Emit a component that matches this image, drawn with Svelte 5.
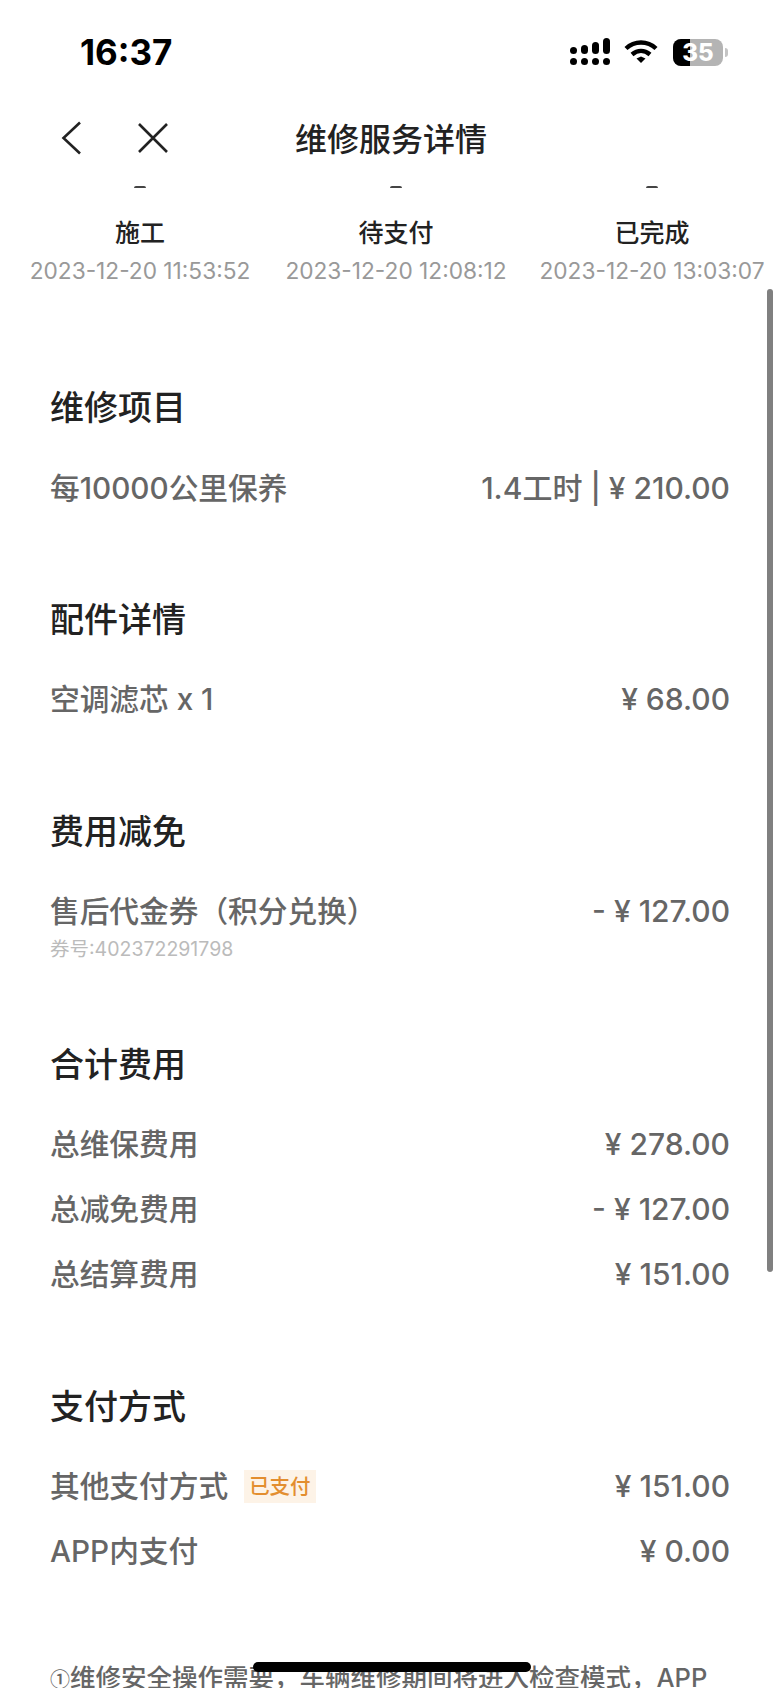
<script>
  const steps = [
    { name: "施工", time: "2023-12-20 11:53:52" },
    { name: "待支付", time: "2023-12-20 12:08:12" },
    { name: "已完成", time: "2023-12-20 13:03:07" }
  ];
  const sections = [
    { title: "维修项目", rows: [{ label: "每10000公里保养", value: "1.4工时 | ¥ 210.00" }] },
    { title: "配件详情", rows: [{ label: "空调滤芯 x 1", value: "¥ 68.00" }] },
    {
      title: "费用减免",
      rows: [{ label: "售后代金券（积分兑换）", value: "- ¥ 127.00", sub: "券号:402372291798" }]
    },
    {
      title: "合计费用",
      rows: [
        { label: "总维保费用", value: "¥ 278.00" },
        { label: "总减免费用", value: "- ¥ 127.00" },
        { label: "总结算费用", value: "¥ 151.00" }
      ]
    },
    {
      title: "支付方式",
      rows: [
        { label: "其他支付方式", value: "¥ 151.00", badge: "已支付" },
        { label: "APP内支付", value: "¥ 0.00" }
      ]
    }
  ];
</script>

<div class="page">
  <div class="status">
    <span class="clock">16:37</span>
    <div class="status-icons">
      <svg class="signal" width="40" height="28" viewBox="0 0 40 28" fill="#000">
        <rect x="0" y="9" width="7" height="7" rx="3.5" />
        <rect x="11" y="7" width="7" height="9" rx="3.5" />
        <rect x="22" y="4" width="7" height="12" rx="3.5" />
        <rect x="33" y="0" width="7" height="16" rx="3.5" />
        <circle cx="3.5" cy="23.5" r="3.5" />
        <circle cx="14.5" cy="23.5" r="3.5" />
        <circle cx="25.5" cy="23.5" r="3.5" />
        <circle cx="36.5" cy="23.5" r="3.5" />
      </svg>
      <svg class="wifi" width="34" height="26" viewBox="0 0 34 26" fill="none" stroke="#000" stroke-width="4.4">
        <path d="M2 9.5C10.500 1.500 23.500 1.500 32 9.500" />
        <path d="M8 15.500C13.500 10.800 20.500 10.800 26 15.500" />
        <path d="M12.500 19.500L17 24L21.500 19.500L17 17.500Z" fill="#000" stroke="none" />
      </svg>
      <div class="battery">
        <div class="battery-fill"></div>
        <span>35</span>
      </div>
      <div class="battery-nub"></div>
    </div>
  </div>

  <div class="nav">
    <svg class="back" width="20" height="34" viewBox="0 0 20 34" fill="none" stroke="#222" stroke-width="2.6">
      <path d="M19 1.500L2.500 17L19 32.500" />
    </svg>
    <svg class="close" width="32" height="30" viewBox="0 0 32 30" fill="none" stroke="#222" stroke-width="2.6">
      <path d="M2 1L30 29M30 1L2 29" />
    </svg>
    <h1>维修服务详情</h1>
  </div>

  <div class="steps">
    {#each steps as step}
      <div class="step">
        <div class="dot"></div>
        <div class="step-name">{step.name}</div>
        <div class="step-time">{step.time}</div>
      </div>
    {/each}
  </div>

  <div class="content">
    {#each sections as section}
      <section>
        <h2>{section.title}</h2>
        {#each section.rows as row}
          <div class="row">
            <div class="label">
              {row.label}
              {#if row.badge}<span class="badge">{row.badge}</span>{/if}
            </div>
            <div class="value">{row.value}</div>
          </div>
          {#if row.sub}<div class="sub">{row.sub}</div>{/if}
        {/each}
      </section>
    {/each}
    <p class="note"><span class="circled">①</span>维修安全操作需要，车辆维修期间将进入检查模式，APP</p>
  </div>

  <div class="scrollbar"></div>
  <div class="home"></div>
</div>

<style>
  :global(body) {
    background: #fff;
  }

  .page {
    position: relative;
    width: 780px;
    height: 1688px;
    overflow: hidden;
    background: #fff;
    font-family: Inter, "Noto Sans CJK SC", sans-serif;
    color: #222;
  }

  .status {
    display: flex;
    justify-content: space-between;
    align-items: center;
    height: 38px;
    padding: 33px 52px 0 80px;
  }

  .clock {
    font-size: 35px;
    font-weight: 700;
    color: #000;
  }

  .status-icons {
    display: flex;
    align-items: center;
  }

  .wifi {
    margin-left: 14px;
  }

  .battery {
    position: relative;
    width: 50px;
    height: 27px;
    margin-left: 15px;
    border-radius: 8px;
    background: #b4b4b4;
    overflow: hidden;
    text-align: center;
    color: #fff;
    font-size: 24px;
    font-weight: 800;
    line-height: 27px;
  }

  .battery-fill {
    position: absolute;
    left: 0;
    top: 0;
    bottom: 0;
    width: 17px;
    background: #000;
  }

  .battery span {
    position: relative;
  }

  .battery-nub {
    width: 3px;
    height: 9px;
    margin-left: 2px;
    border-radius: 0 3px 3px 0;
    background: #c4c4c4;
  }

  .nav {
    position: relative;
    display: flex;
    align-items: center;
    height: 66px;
    margin-top: 34px;
    padding-left: 61px;
  }

  .close {
    margin-left: 56px;
  }

  h1 {
    margin: 4px 0 0 126px;
    font-size: 32px;
    font-weight: 500;
    line-height: 40px;
    color: #222;
  }

  .steps {
    display: grid;
    grid-template-columns: repeat(3, 256px);
    padding: 0 0 0 12px;
    margin-top: 15px;
  }

  .step {
    display: flex;
    flex-direction: column;
    align-items: center;
  }

  .dot {
    width: 12px;
    height: 2px;
    border-radius: 6px 6px 0 0;
    background: #444;
  }

  .step-name {
    margin-top: 27px;
    font-size: 25px;
    font-weight: 500;
    line-height: 36px;
    color: #222;
  }

  .step-time {
    margin-top: 5px;
    font-size: 22.7px;
    line-height: 30px;
    color: #999;
    white-space: nowrap;
  }

  .content {
    padding: 0 50px;
    margin-top: 99px;
  }

  section {
    margin-bottom: 79px;
  }

  h2 {
    margin: 0 0 22px;
    font-size: 34px;
    font-weight: 500;
    line-height: 46px;
    color: #222;
  }

  .row {
    display: flex;
    justify-content: space-between;
    align-items: baseline;
    height: 65px;
    padding-top: 11px;
    box-sizing: border-box;
    font-size: 30px;
    font-weight: 500;
    color: #666;
  }

  .label {
    display: flex;
    align-items: center;
    font-size: 29.7px;
  }

  .badge {
    margin: 4px 0 0 16px;
    padding: 0 5px;
    font-size: 20.5px;
    font-weight: 500;
    line-height: 33px;
    color: #e38e2f;
    background: #fdf3e7;
  }

  .sub {
    margin-top: -7px;
    font-size: 19.5px;
    line-height: 28px;
    color: #bbb;
  }

  .note {
    margin: -3px 0 0;
    font-size: 25.5px;
    font-weight: 500;
    line-height: 40px;
    color: #666;
    white-space: nowrap;
  }

  .circled {
    font-family: "Noto Sans CJK SC", sans-serif;
    font-size: 20px;
  }

  .scrollbar {
    position: absolute;
    right: 7px;
    top: 289px;
    width: 6px;
    height: 983px;
    border-radius: 3px;
    background: #808080;
  }

  .home {
    position: absolute;
    left: 253px;
    top: 1662px;
    width: 278px;
    height: 10px;
    border-radius: 5px;
    background: #000;
  }
</style>
